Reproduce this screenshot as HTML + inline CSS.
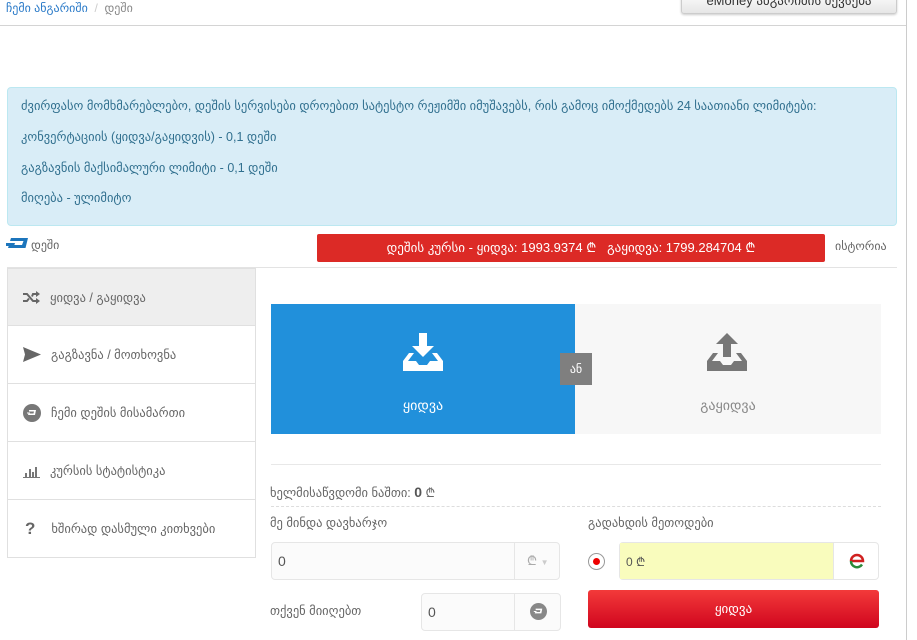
<!DOCTYPE html>
<html><head><meta charset="utf-8"><style>
*{box-sizing:border-box;margin:0;padding:0}
body{width:917px;height:640px;overflow:hidden;background:#fff;font-family:"Liberation Sans","DejaVu Sans",sans-serif;font-size:12px;color:#555;position:relative}
.a{position:absolute;white-space:nowrap}
.menu .it{position:absolute;left:7px;width:249px;height:58px;border:1px solid #e0e0e0;border-top:none;display:flex;align-items:center;padding-left:15px;color:#666;font-size:12.5px}
.menu .it svg{margin-right:10px}
.inp{position:absolute;border:1px solid #e6e6e6;border-radius:4px;background:#fbfbfb;display:flex;align-items:center;font-size:14px;color:#555}
</style></head><body>
<div class="a" style="left:6px;top:1px;color:#2a7ac8">ჩემი ანგარიში <span style="color:#ccc">&nbsp;/&nbsp;</span> <span style="color:#888">დეში</span></div>
<div class="a" style="left:681px;top:-10px;width:216px;height:24px;border:1px solid #ccc;border-radius:3px;background:linear-gradient(#fff,#e6e6e6);box-shadow:0 1px 2px rgba(0,0,0,.2);text-align:center;line-height:20px;font-size:13px;color:#333">eMoney ანგარიშის შევსება</div>
<div class="a" style="left:0;top:25px;width:906px;height:1px;background:#d4d4d4"></div>
<div class="a" style="left:906px;top:0;width:1px;height:640px;background:#ccc"></div>

<div class="a" style="left:7px;top:87px;width:890px;height:139px;background:#d9edf7;border:1px solid #bce8f1;border-radius:4px;color:#31708f;font-size:12.5px">
<div class="a" style="left:13px;top:10px">ძვირფასო მომხმარებლებო, დეშის სერვისები დროებით სატესტო რეჟიმში იმუშავებს, რის გამოც იმოქმედებს 24 საათიანი ლიმიტები:</div>
<div class="a" style="left:13px;top:41px">კონვერტაციის (ყიდვა/გაყიდვის) - 0,1 დეში</div>
<div class="a" style="left:13px;top:72px">გაგზავნის მაქსიმალური ლიმიტი - 0,1 დეში</div>
<div class="a" style="left:13px;top:102px">მიღება - ულიმიტო</div>
</div>

<svg class="a" style="left:6px;top:238px" width="22" height="13" viewBox="0 0 22 13"><path d="M5 0h17l-2.5 10H2l1-3h13l1.5-4H4z M0 5h9l-1 3H0z" fill="#1c75bc"/></svg>
<div class="a" style="left:31px;top:238px;color:#666">დეში</div>
<div class="a" style="left:317px;top:234px;width:508px;height:28px;background:#dc2a26;border-radius:2px;color:#fff;text-align:center;line-height:28px;font-size:13px">დეშის კურსი - ყიდვა: 1993.9374 ₾ &nbsp;&nbsp;გაყიდვა: 1799.284704 ₾</div>
<div class="a" style="left:835px;top:239px;color:#666">ისტორია</div>
<div class="a" style="left:7px;top:267px;width:890px;height:1px;background:#e3e3e3"></div>

<div class="menu">
<div class="it" style="top:268px;background:#eee;border-top:1px solid #e0e0e0"><svg width="17" height="13" viewBox="0 0 17 13"><path d="M0 3h4l6 7h3M0 10h4l2-2.5M9 5.5l1-2.5h3" stroke="#666" stroke-width="2" fill="none"/><path d="M13 0l4 3-4 3zM13 7l4 3-4 3z" fill="#666"/></svg>ყიდვა / გაყიდვა</div>
<div class="it" style="top:326px"><svg width="18" height="15" viewBox="0 0 18 15"><path d="M0 0l18 7.5L0 15l2-7.5z" fill="#666"/></svg>გაგზავნა / მოთხოვნა</div>
<div class="it" style="top:384px"><svg width="18" height="18" viewBox="0 0 18 18"><circle cx="9" cy="9" r="9" fill="#777"/><path d="M6 6h7l-1 5H5l.5-1.5h5l.5-2H6zM4 8.5h3l-.3 1H4z" fill="#fff"/></svg>ჩემი დეშის მისამართი</div>
<div class="it" style="top:442px"><svg width="17" height="14" viewBox="0 0 17 14"><path d="M0 13h17v1H0zM2 9h2v4H2zM6 5h2v8H6zM9 8h2v5H9zM12 3h2v10h-2z" fill="#777"/></svg>კურსის სტატისტიკა</div>
<div class="it" style="top:500px"><span style="font-size:17px;font-weight:bold;color:#666;margin-right:16px;margin-left:2px">?</span>ხშირად დასმული კითხვები</div>
</div>

<div class="a" style="left:271px;top:304px;width:304px;height:130px;background:#2190db"></div>
<svg class="a" style="left:403px;top:333px" width="40" height="38" viewBox="0 0 40 38"><path d="M16 0h8v13h7L20 24 9 13h7z" fill="#fff"/><path d="M0 28l6-8h5l-6 8h8l3 4h8l3-4h8l-6-8h5l6 8v10H0z" fill="#fff"/></svg>
<div class="a" style="left:271px;top:397px;width:304px;text-align:center;color:#fff;font-size:14px">ყიდვა</div>
<div class="a" style="left:575px;top:304px;width:306px;height:130px;background:#f7f7f7"></div>
<svg class="a" style="left:707px;top:333px" width="40" height="38" viewBox="0 0 40 38"><path d="M20 0l11 11h-7v13h-8V11H9z" fill="#777"/><path d="M0 28l6-8h5l-6 8h8l3 4h8l3-4h8l-6-8h5l6 8v10H0z" fill="#777"/></svg>
<div class="a" style="left:575px;top:397px;width:306px;text-align:center;color:#888;font-size:14px">გაყიდვა</div>
<div class="a" style="left:560px;top:353px;width:32px;height:32px;background:#7f7f7f;color:#fff;text-align:center;line-height:32px;font-size:12px">ან</div>

<div class="a" style="left:271px;top:464px;width:610px;height:1px;background:#e8e8e8"></div>
<div class="a" style="left:270px;top:484px;color:#666;font-size:12.5px">ხელმისაწვდომი ნაშთი: <b style="font-size:14px;color:#555">0</b> ₾</div>
<div class="a" style="left:271px;top:506px;width:610px;border-top:1px dashed #ddd"></div>
<div class="a" style="left:270px;top:515px;color:#666;font-size:12.5px">მე მინდა დავხარჯო</div>
<div class="a" style="left:588px;top:515px;color:#666;font-size:12.5px">გადახდის მეთოდები</div>

<div class="inp" style="left:271px;top:542px;width:289px;height:38px"><span style="margin-left:6px">0</span>
<div class="a" style="left:242px;top:0;width:46px;height:36px;border-left:1px solid #e6e6e6;line-height:36px;padding-left:12px;font-size:13px;color:#aaa">₾ <span style="font-size:8px;color:#ccc">▼</span></div></div>
<div class="a" style="left:588px;top:553px;width:17px;height:17px;border:1px solid #999;border-radius:50%;background:#fff"><div style="margin:4px;width:7px;height:7px;border-radius:50%;background:#e00"></div></div>
<div class="inp" style="left:619px;top:542px;width:260px;height:38px;background:#fff"><div style="position:absolute;left:0;top:0;width:213px;height:36px;background:#f9fcbd"></div><span style="position:relative;margin-left:6px;font-size:12px;color:#555">0 ₾</span>
<div class="a" style="left:213px;top:0;width:46px;height:36px;border-left:1px solid #e6e6e6"><svg style="position:absolute;left:15px;top:10px" width="16" height="16" viewBox="0 0 16 16"><path d="M2 8a6 6 0 0 1 12 0H2" fill="none" stroke="#d0201f" stroke-width="2.5"/><path d="M2 8a6 6 0 0 0 11 3.5" fill="none" stroke="#2a8a3a" stroke-width="2.5"/></svg></div></div>
<div class="a" style="left:270px;top:603px;color:#666;font-size:12.5px">თქვენ მიიღებთ</div>
<div class="inp" style="left:421px;top:593px;width:140px;height:38px"><span style="margin-left:6px">0</span>
<div class="a" style="left:92px;top:0;width:47px;height:36px;border-left:1px solid #e6e6e6"><svg style="position:absolute;left:15px;top:9px" width="17" height="17" viewBox="0 0 18 18"><circle cx="9" cy="9" r="9" fill="#888"/><path d="M6 6h7l-1 5H5l.5-1.5h5l.5-2H6zM4 8.5h3l-.3 1H4z" fill="#fff"/></svg></div></div>
<div class="a" style="left:588px;top:590px;width:291px;height:38px;border-radius:3px;background:linear-gradient(#f33a3a,#d0051e);color:#fff;text-align:center;line-height:38px;font-size:13px">ყიდვა</div>
</body></html>
